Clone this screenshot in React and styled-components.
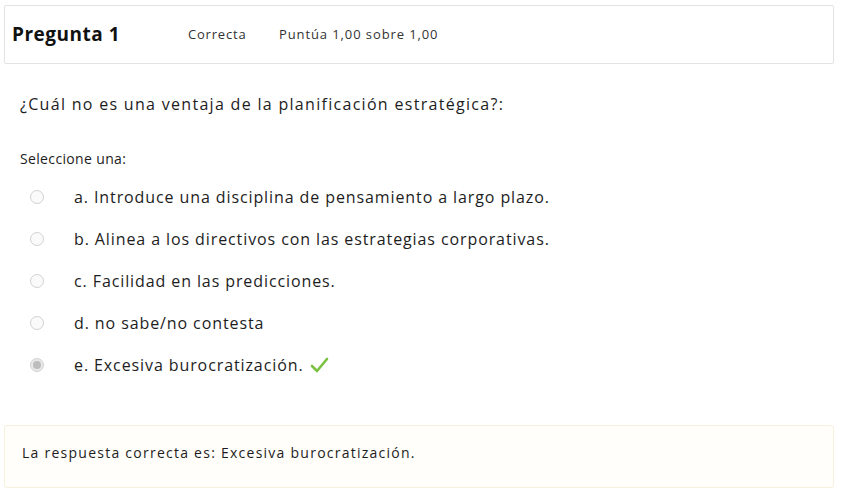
import styled, { createGlobalStyle } from "styled-components";

const GlobalStyle = createGlobalStyle`
  html, body {
    margin: 0;
    padding: 0;
    background: #ffffff;
  }
  body {
    font-family: "Open Sans", "Liberation Sans", sans-serif;
    color: #1d1d1d;
  }
`;

const options = [
  { id: "a", text: "a. Introduce una disciplina de pensamiento a largo plazo." },
  { id: "b", text: "b. Alinea a los directivos con las estrategias corporativas." },
  { id: "c", text: "c. Facilidad en las predicciones." },
  { id: "d", text: "d. no sabe/no contesta" },
  { id: "e", text: "e. Excesiva burocratización.", checked: true, correct: true },
];

const Page = styled.div`
  width: 848px;
  height: 500px;
  padding: 5px 14px 0 4px;
  box-sizing: border-box;
  display: flex;
  flex-direction: column;
`;

const InfoBar = styled.div`
  height: 59px;
  box-sizing: border-box;
  border: 1px solid #e3e3e3;
  border-radius: 2px;
  display: flex;
  align-items: center;
  padding: 0 0 2px 7px;
`;

const QuestionNo = styled.h3`
  margin: 0;
  width: 176px;
  font-size: 19px;
  letter-spacing: 0.5px;
  font-weight: 700;
  color: #111;
`;

const State = styled.span`
  font-size: 13px;
  letter-spacing: 0.8px;
  width: 91px;
  color: #333;
`;

const Grade = styled.span`
  font-size: 13px;
  letter-spacing: 0.9px;
  color: #333;
`;

const Content = styled.div`
  padding: 30px 0 0 16px;
`;

const QText = styled.p`
  margin: 0;
  font-size: 16px;
  letter-spacing: 1.3px;
  line-height: 20px;
`;

const Prompt = styled.p`
  margin: 36px 0 8px;
  font-size: 14px;
  letter-spacing: 0.35px;
  line-height: 18px;
`;

const Answers = styled.div`
  display: flex;
  flex-direction: column;
  padding-left: 10px;
`;

const Row = styled.label`
  display: flex;
  align-items: center;
  height: 42px;
  font-size: 16px;
  letter-spacing: 0.9px;
`;

const Radio = styled.span`
  width: 14px;
  height: 14px;
  border-radius: 50%;
  border: 1px solid #d2d2d2;
  background: ${(p) => (p.checked ? "#e8e8e8" : "#fafafa")};
  box-sizing: border-box;
  margin-right: 30px;
  display: flex;
  align-items: center;
  justify-content: center;

  &::after {
    content: "";
    display: ${(p) => (p.checked ? "block" : "none")};
    width: 8px;
    height: 8px;
    border-radius: 50%;
    background: #bdbdbd;
  }
`;

const Check = styled.svg`
  margin-left: 5px;
  width: 20px;
  height: 18px;
`;

const Feedback = styled.div`
  margin-top: 39px;
  height: 63px;
  box-sizing: border-box;
  border: 1px solid #f6f1dc;
  border-radius: 3px;
  background: #fffefa;
  padding: 18px 0 0 17px;
  font-size: 14px;
  letter-spacing: 1.25px;
  line-height: 18px;
`;

export default function App() {
  return (
    <>
      <GlobalStyle />
      <Page>
        <InfoBar>
          <QuestionNo>Pregunta 1</QuestionNo>
          <State>Correcta</State>
          <Grade>Puntúa 1,00 sobre 1,00</Grade>
        </InfoBar>
        <Content>
          <QText>¿Cuál no es una ventaja de la planificación estratégica?:</QText>
          <Prompt>Seleccione una:</Prompt>
          <Answers>
            {options.map((o) => (
              <Row key={o.id}>
                <Radio checked={o.checked} />
                {o.text}
                {o.correct && (
                  <Check viewBox="0 0 20 18">
                    <path
                      d="M3 10 L8 15 L18 3"
                      fill="none"
                      stroke="#7bc142"
                      strokeWidth="2.6"
                      strokeLinecap="round"
                      strokeLinejoin="round"
                    />
                  </Check>
                )}
              </Row>
            ))}
          </Answers>
        </Content>
        <Feedback>La respuesta correcta es: Excesiva burocratización.</Feedback>
      </Page>
    </>
  );
}
